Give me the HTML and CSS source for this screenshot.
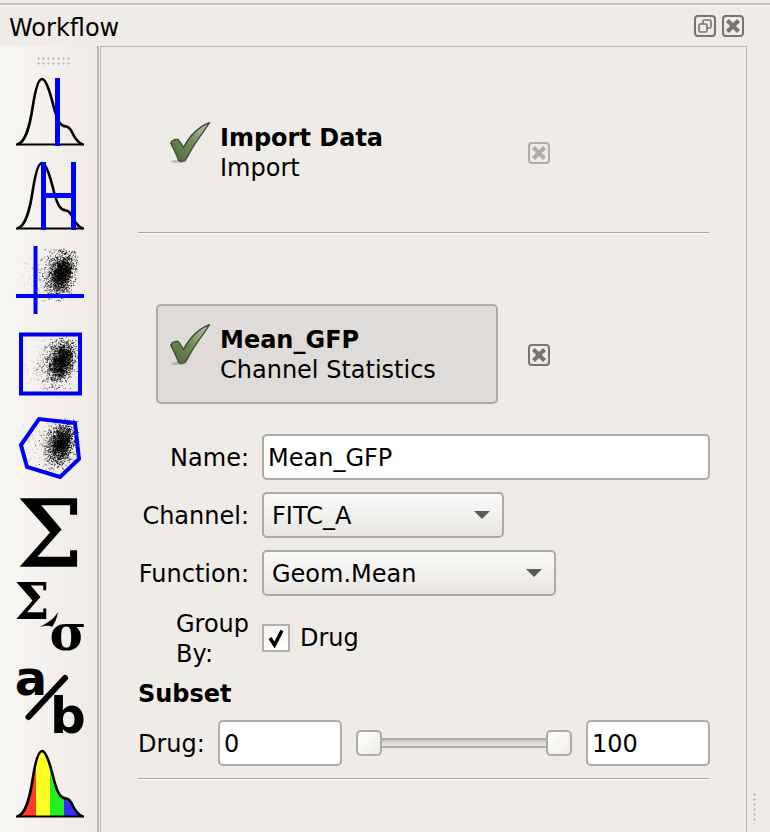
FILE: index.html
```html
<!DOCTYPE html>
<html lang="en">
<head>
<meta charset="utf-8">
<title>Workflow</title>
<link rel="stylesheet" href="styles.css">
</head>
<body>
<svg class="defs" width="0" height="0" aria-hidden="true">
  <defs>
    <linearGradient id="checkFill" x1="0" y1="1" x2="1" y2="0">
      <stop offset="0" stop-color="#4c6838"/>
      <stop offset=".5" stop-color="#6f8b57"/>
      <stop offset="1" stop-color="#c2cab4"/>
    </linearGradient>
    <symbol id="check" viewBox="0 0 42 42">
      <ellipse cx="9" cy="39.500" rx="8" ry="1.600" fill="#8d8a82" opacity=".45"/>
      <path d="M.7 21 C2 18.500 5 17 8 17.500 C10 19 12 23 13.500 25.500 C19 15 28 5 39.500 .7 C35 8 30 14 25 22 C21 28 18 34 15.500 38 C13 39.500 10 39.500 8.500 38.500 C7 33 3 26 .7 21 Z" fill="url(#checkFill)" stroke="#3d4a30" stroke-width="1.300" stroke-linejoin="round"/>
    </symbol>
    <symbol id="closeIcon" viewBox="0 0 22 22">
      <rect x="1" y="1" width="20" height="20" rx="3" fill="none" stroke="currentColor" stroke-width="2"/>
      <path d="M5.500 5.500 L16.500 16.500 M16.500 5.500 L5.500 16.500" stroke="currentColor" stroke-width="4.200"/>
    </symbol>
  </defs>
</svg>

<header class="titlebar">
  <span class="title">Workflow</span>
  <div class="win-buttons">
    <svg class="win-btn" viewBox="0 0 22 22"><rect x="1" y="1" width="20" height="20" rx="3" fill="none" stroke="currentColor" stroke-width="2"/><rect x="9" y="5" width="8" height="8" rx="1.500" fill="none" stroke="currentColor" stroke-width="1.600"/><rect x="5" y="9" width="8" height="8" rx="1.500" fill="#efebe7" stroke="currentColor" stroke-width="1.600"/></svg>
    <svg class="win-btn"><use href="#closeIcon"/></svg>
  </div>
</header>

<div class="main">
  <aside class="toolbar">
    <div class="handle"></div>
    <svg class="tool" viewBox="15 77 70 70">
      <path class="curve" d="M17 144.500 C26 143 30 125 33 105 C36 86 39 79 42 79 C46 79 50 92 54 108 C58 123 61 126 66 126.500 C72 127 72 135 76 139 C79 143 81 144 83 144.500"/>
      <path class="axis" d="M16 144.500 H84"/>
      <rect class="blue" x="55" y="78" width="5" height="68"/>
    </svg>
    <svg class="tool" viewBox="15 161 70 70">
      <path class="curve" d="M17 228.500 C26 227 30 209 33 189 C36 170 39 163 42 163 C46 163 50 176 54 192 C58 207 61 210 66 210.500 C72 211 72 219 76 223 C79 227 81 228 83 228.500"/>
      <path class="axis" d="M16 228.500 H84"/>
      <rect class="blue" x="41" y="162" width="5" height="68"/>
      <rect class="blue" x="71" y="162" width="5" height="68"/>
      <rect class="blue" x="45" y="193" width="27" height="5"/>
    </svg>
    <svg class="tool" viewBox="15 245 70 70">
      <g class="scatter" data-cx="60" data-cy="273"></g>
      <rect class="blue" x="33.500" y="246" width="4" height="68"/>
      <rect class="blue" x="16" y="294" width="68" height="4"/>
    </svg>
    <svg class="tool" viewBox="15 329 70 70">
      <g class="scatter" data-cx="60" data-cy="361"></g>
      <rect class="frame-line" x="21" y="334.500" width="59" height="59"/>
    </svg>
    <svg class="tool" viewBox="15 413 70 70">
      <g class="scatter" data-cx="60" data-cy="443"></g>
      <polygon class="frame-line" points="21,445 39,419 75,423 79,459 60,477 27,467"/>
    </svg>
    <svg class="tool" viewBox="15 497 70 70">
      <text class="glyph-book serif sigma-big" x="50" y="566" text-anchor="middle">Σ</text>
    </svg>
    <svg class="tool" viewBox="15 581 70 70">
      <text class="glyph serif sigma-small" x="32" y="619" text-anchor="middle">Σ</text>
      <path d="M40 627 C47 623 53 620 58 612 C57 618 55 623 52 627 C48 625 45 626 40 627 Z"/>
      <text class="glyph serif sigma-small" x="68" y="650" text-anchor="middle">σ</text>
    </svg>
    <svg class="tool" viewBox="15 665 70 70">
      <text class="glyph sans letter-a" x="31" y="695" text-anchor="middle">a</text>
      <path class="slash" d="M28.500 717 L65 678"/>
      <text class="glyph sans letter-b" x="68" y="733" text-anchor="middle">b</text>
    </svg>
    <svg class="tool" viewBox="15 749 70 70">
      <defs>
        <clipPath id="histClip">
          <path d="M17 816.500 C26 815 30 797 33 777 C36 758 39 751 42 751 C46 751 50 764 54 780 C58 795 61 798 66 798.500 C72 799 72 807 76 811 C79 815 81 816 83 816.500 Z"/>
        </clipPath>
      </defs>
      <g clip-path="url(#histClip)">
        <rect x="15" y="749" width="21" height="70" fill="#ff3b24"/>
        <rect x="36" y="749" width="14" height="70" fill="#ffff22"/>
        <rect x="50" y="749" width="14" height="70" fill="#22f022"/>
        <rect x="64" y="749" width="21" height="70" fill="#3a2cff"/>
      </g>
      <path class="curve" d="M17 816.500 C26 815 30 797 33 777 C36 758 39 751 42 751 C46 751 50 764 54 780 C58 795 61 798 66 798.500 C72 799 72 807 76 811 C79 815 81 816 83 816.500"/>
      <path class="axis" d="M16 816.500 H84"/>
    </svg>
  </aside>

  <div class="splitter"></div>

  <main class="panel">
    <section class="task-row">
      <div class="task">
        <svg class="check"><use href="#check"/></svg>
        <div class="task-text">
          <strong>Import Data</strong>
          <span>Import</span>
        </div>
      </div>
      <svg class="close disabled"><use href="#closeIcon"/></svg>
    </section>
    <hr class="rule">
    <section class="task-row">
      <div class="task selected">
        <svg class="check"><use href="#check"/></svg>
        <div class="task-text">
          <strong>Mean_GFP</strong>
          <span>Channel Statistics</span>
        </div>
      </div>
      <svg class="close"><use href="#closeIcon"/></svg>
    </section>

    <form class="form">
      <div class="field">
        <label class="label">Name:</label>
        <input class="input grow" type="text" value="Mean_GFP">
      </div>
      <div class="field">
        <label class="label">Channel:</label>
        <div class="select channel"><span>FITC_A</span><i class="arrow"></i></div>
      </div>
      <div class="field">
        <label class="label">Function:</label>
        <div class="select function"><span>Geom.Mean</span><i class="arrow"></i></div>
      </div>
      <div class="field group-row">
        <label class="label wrap">Group By:</label>
        <span class="checkbox"><svg viewBox="0 0 24 24"><path d="M6 12 L10.500 19 L18 4.500" fill="none" stroke="#000" stroke-width="3.400"/></svg></span>
        <span class="check-label">Drug</span>
      </div>
      <div class="subset">Subset</div>
      <div class="field">
        <label class="range-label">Drug:</label>
        <input class="input range-input" type="text" value="0">
        <div class="slider">
          <span class="knob"></span>
          <span class="groove"></span>
          <span class="knob"></span>
        </div>
        <input class="input range-input" type="text" value="100">
      </div>
    </form>
    <hr class="rule">
  </main>

  <div class="grip"></div>
</div>
<script src="app.js"></script>
</body>
</html>
```

FILE: styles.css
```css
* { box-sizing: border-box; }
body {
  margin: 0;
  height: 832px;
  overflow: hidden;
  background: #efebe7;
  color: #000;
  font-family: "DejaVu Sans", sans-serif;
  font-size: 24px;
  display: flex;
  flex-direction: column;
}
.defs { display: block; height: 0; }

.titlebar {
  height: 43px;
  margin-top: 3px;
  flex: none;
  border-top: 2px solid #c6c2bc;
  box-shadow: inset 0 1px 0 #fbfaf9;
  display: flex;
  align-items: center;
  justify-content: space-between;
  padding: 0 26px 0 9px;
}
.title { line-height: 30px; padding-top: 4px; }
.win-buttons { display: flex; gap: 6px; }
.win-btn { width: 22px; height: 22px; color: #777571; display: block; }

.main { flex: 1; display: flex; min-height: 0; }

.toolbar {
  width: 97px;
  flex: none;
  padding-top: 10px;
  background: linear-gradient(to right, #f8f6f3, #efebe7);
  display: flex;
  flex-direction: column;
  align-items: flex-start;
}
.handle {
  width: 35px;
  height: 10px;
  flex: none;
  margin: 0 0 11px 36px;
  background-image: radial-gradient(circle, #c9c6c0 1px, transparent 1.200px);
  background-size: 5px 5px;
}
.tool { width: 70px; height: 70px; margin: 0 0 14px 15px; flex: none; display: block; overflow: visible; }
.curve { fill: none; stroke: #000; stroke-width: 2.600; }
.axis { fill: none; stroke: #000; stroke-width: 2; }
.blue { fill: #0000ff; }
.frame-line { fill: none; stroke: #0000f0; stroke-width: 4; }
.glyph { font-weight: 700; }
.glyph-book { font-weight: 400; stroke: #000; stroke-width: 1.500; }
.serif { font-family: "DejaVu Serif", serif; }
.sans { font-family: "DejaVu Sans", sans-serif; }
.sigma-big { font-size: 92px; }
.sigma-small { font-size: 50px; }
.letter-a { font-size: 48px; }
.letter-b { font-size: 50px; }
.slash { fill: none; stroke: #000; stroke-width: 6; stroke-linecap: round; }

.splitter {
  width: 3px;
  flex: none;
  background: #b9b5b0;
  border-right: 1px solid #f6f4f1;
}

.panel {
  width: 647px;
  height: 800px;
  flex: none;
  border: 1px solid #bab6b1;
  border-bottom: 0;
  padding: 56px 36px 0 37px;
}

.task-row { display: flex; align-items: center; }
.task {
  width: 342px;
  height: 100px;
  margin-left: 18px;
  border: 2px solid transparent;
  border-radius: 5px;
  display: flex;
  align-items: center;
  padding: 0 0 0 12px;
}
.task.selected { background: #dfdbd8; border-color: #aeaaa5; padding-top: 2px; }
.check { width: 42px; height: 42px; flex: none; margin: 0 8px 20px 0; }
.task-text { display: flex; flex-direction: column; line-height: 30px; }
.task-text strong { font-weight: 700; }
.close { width: 22px; height: 22px; margin: 0 0 0 30px; color: #777571; flex: none; }
.task.selected + .close { margin-top: 2px; }
.close.disabled { color: #b0aeaa; }

.rule {
  height: 2px;
  margin: 29px 1px 70px 0;
  border: 0;
  border-top: 1px solid #aca8a3;
  border-bottom: 1px solid #fbfaf9;
}
.form + .rule { margin: 12px 1px 0 0; }

.form { margin-top: 30px; display: flex; flex-direction: column; gap: 12px; }
.field { display: flex; align-items: center; height: 46px; }
.label { width: 111px; padding-top: 2px; text-align: right; margin-right: 13px; flex: none; }
.input {
  height: 46px;
  border: 2px solid #aeaaa5;
  border-radius: 5px;
  background: #fff;
  padding: 2px 4px 0;
  font: inherit;
  color: #000;
  outline: none;
}
.grow { flex: 1; min-width: 0; }
.select {
  height: 46px;
  border: 2px solid #aeaaa5;
  border-radius: 5px;
  background: linear-gradient(to bottom, #fafaf9, #e9e6e2);
  display: flex;
  align-items: center;
  justify-content: space-between;
  padding: 2px 12px 0 8px;
}
.channel { width: 242px; }
.function { width: 294px; }
.arrow {
  width: 0;
  height: 0;
  margin-top: -2px;
  border-left: 8px solid transparent;
  border-right: 8px solid transparent;
  border-top: 8px solid #5b5955;
}
.group-row { height: 60px; }
.wrap { text-align: left; width: 73px; margin-left: 38px; margin-right: 13px; line-height: 30px; }
.checkbox {
  width: 28px;
  height: 28px;
  border: 2px solid #b5b1ac;
  background: linear-gradient(to bottom, #f4f3f1, #fff);
  display: block;
  flex: none;
}
.checkbox svg { display: block; width: 24px; height: 24px; }
.check-label { margin-left: 10px; }
.subset { font-weight: 700; height: 28px; line-height: 28px; }
.range-label { width: 80px; padding-top: 2px; flex: none; }
.range-input { width: 124px; flex: none; }
.slider { flex: 1; display: flex; align-items: center; margin: 0 14px; }
.knob {
  width: 26px;
  height: 26px;
  flex: none;
  border: 2px solid #aeaaa5;
  border-radius: 5px;
  background: linear-gradient(135deg, #fff, #efedea);
}
.groove {
  flex: 1;
  height: 10px;
  border-top: 2px solid #aeaaa5;
  border-bottom: 2px solid #aeaaa5;
  background: linear-gradient(to bottom, #c9c6c1, #efedea);
}

.grip {
  width: 3px;
  height: 32px;
  margin: 746px 0 0 6px;
  background-image: radial-gradient(circle, #c4c1bb 1.200px, transparent 1.400px);
  background-size: 3px 5px;
  flex: none;
}
```

FILE: app.js
```js
// Seeded dots for the three scatter-plot tool icons.
var seed = 12345;
function rnd() {
  seed = (seed * 1103515245 + 12345) & 0x7fffffff;
  return seed / 0x7fffffff;
}
function gauss() {
  return Math.sqrt(-2 * Math.log(rnd() + 1e-6)) * Math.cos(2 * Math.PI * rnd());
}
function layer(cx, cy, n, sx, sy, size, opacity, lim) {
  var d = "";
  for (var i = 0; i < n; i++) {
    var y = gauss();
    var x = gauss() * sx + y * -1.6;
    var px = cx + x;
    var py = cy + y * sy;
    if (px < lim.x0 || px > lim.x1 || py < lim.y0 || py > lim.y1) continue;
    d += "M" + px.toFixed(1) + " " + py.toFixed(1) + "h" + size + "v" + size + "h-" + size + "z";
  }
  var p = document.createElementNS("http://www.w3.org/2000/svg", "path");
  p.setAttribute("d", d);
  p.setAttribute("fill", "#000");
  p.setAttribute("opacity", opacity);
  return p;
}
document.querySelectorAll(".scatter").forEach(function (g) {
  var cx = +g.dataset.cx, cy = +g.dataset.cy;
  var lim = { x0: cx - 37, x1: cx + 18, y0: cy - 25, y1: cy + 28 };
  g.appendChild(layer(cx - 8, cy + 2, 320, 13, 12, 0.8, 0.3, lim));
  g.appendChild(layer(cx - 1, cy + 1, 900, 7, 11, 1, 0.7, lim));
  g.appendChild(layer(cx + 2, cy - 1, 800, 5, 8, 1, 0.95, lim));
});
```
